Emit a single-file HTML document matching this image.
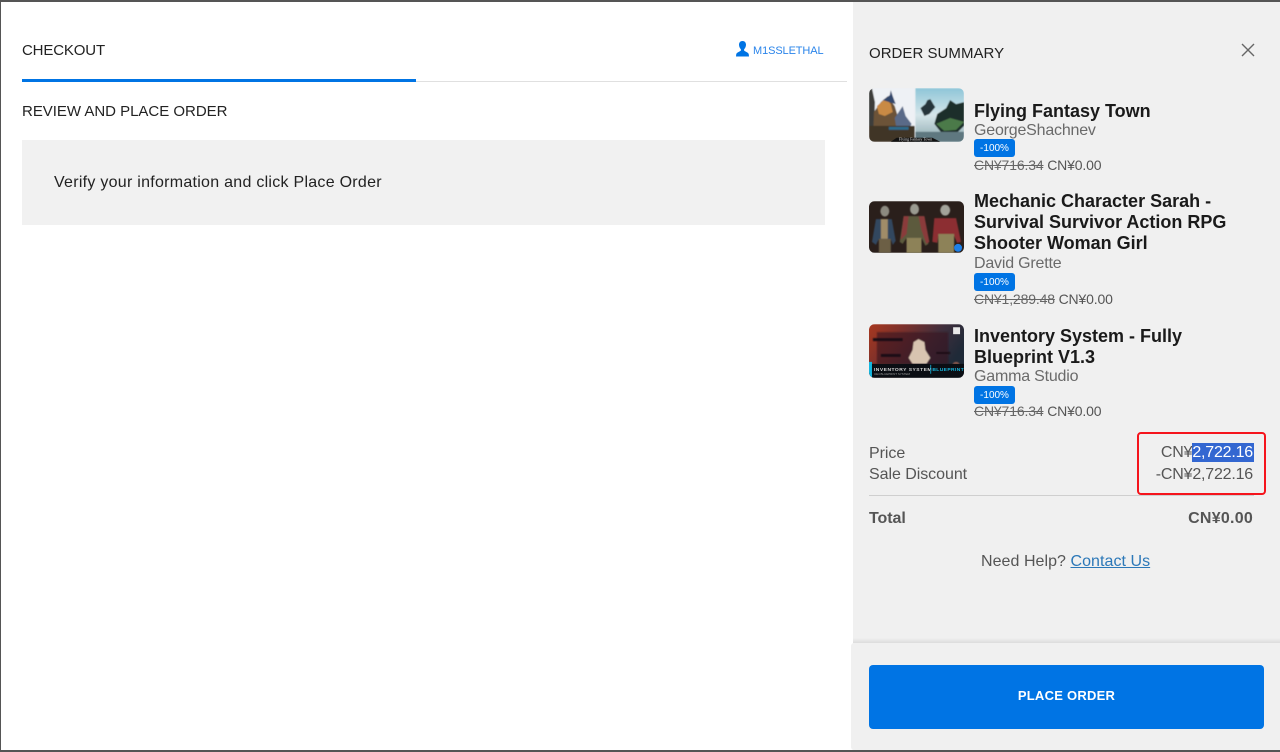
<!DOCTYPE html>
<html lang="en">
<head>
<meta charset="utf-8">
<title>Checkout</title>
<style>
html,body{margin:0;padding:0;background:#fff}
body{position:relative;width:1280px;height:752px;overflow:hidden;font-family:"Liberation Sans","Noto Sans CJK SC",sans-serif;color:#202020}
.t{position:absolute;white-space:nowrap;line-height:20px;height:20px}
.b{position:absolute}
.h{font-size:18px;font-weight:bold;color:#1a1a1a;line-height:21px;height:21px}
.s{font-size:16px;color:#6a6a6a;letter-spacing:-.2px}
.p{font-size:14px;color:#555;letter-spacing:-.15px}
.p s{color:#666}
.g{font-size:16px;color:#555;letter-spacing:-.05px}
.tag{position:absolute;left:974px;width:41px;height:18px;background:#0074e4;border-radius:3px;color:#fff;font-size:10px;line-height:20px;text-align:center}
svg.th{position:absolute;left:869px;width:95px;border-radius:6px;overflow:hidden}
</style>
</head>
<body>
<div class="b" style="left:853px;top:0;width:427px;height:752px;background:#f0f0f0"></div>

<div class="t" style="left:22px;top:41px;font-size:15px;color:#222;letter-spacing:-.15px">CHECKOUT</div>
<svg class="b" style="left:736px;top:41px" width="13" height="16" viewBox="0 0 13 16"><path d="M6.500 0C4.200 0 3 1.700 3 3.800c0 1.800.8 3.400 1.800 4.400.3.500.2 1.300-.3 1.700C3 11 .5 11.500.2 13.500L0 15.500h13l-.2-2c-.3-2-2.800-2.500-4.300-3.600-.5-.4-.6-1.200-.3-1.700C9.200 7.200 10 5.600 10 3.800 10 1.700 8.800 0 6.500 0z" fill="#0074e4"/></svg>
<div class="t" style="left:753px;top:41px;font-size:11px;color:#2a84ea;letter-spacing:-.1px">M1SSLETHAL</div>
<div class="b" style="left:22px;top:81px;width:825px;height:1px;background:#e0e0e0"></div>
<div class="b" style="left:22px;top:79px;width:394px;height:3px;background:#0074e4"></div>
<div class="t" style="left:22px;top:102px;font-size:15px;color:#222;letter-spacing:-.02px">REVIEW AND PLACE ORDER</div>
<div class="b" style="left:22px;top:140px;width:803px;height:85px;background:#f1f1f1"></div>
<div class="t" style="left:54px;top:173px;font-size:16px;color:#222;letter-spacing:.27px">Verify your information and click Place Order</div>

<div class="t" style="left:869px;top:44px;font-size:15px;color:#222;letter-spacing:.03px">ORDER SUMMARY</div>
<svg class="b" style="left:1241px;top:43px" width="14" height="14" viewBox="0 0 14 14"><path d="M1 1L13 13M13 1L1 13" stroke="#666" stroke-width="1.400" fill="none"/></svg>

<!-- Item 1 -->
<svg class="th" style="top:88px;height:54px" viewBox="0 0 96 54">
<defs><filter id="bl" x="-5%" y="-5%" width="110%" height="110%"><feGaussianBlur stdDeviation=".6"/></filter>
<linearGradient id="sky" x1="0" y1="0" x2="0" y2="1"><stop offset="0" stop-color="#8fc6d8"/><stop offset=".5" stop-color="#d6e6ea"/><stop offset="1" stop-color="#8aa6ac"/></linearGradient></defs>
<rect width="96" height="54" fill="#e8eef2"/>
<g filter="url(#bl)">
<rect x="0" y="0" width="46" height="54" fill="#eef1f5"/>
<path d="M0 0h3l3 14-1 32H0z" fill="#3e3e3a"/>
<path d="M5 24L12 14l7-6 7 10 3 10 6 4 4 10v12H4z" fill="#6c5338"/>
<path d="M8 18l9-8 5 6 2 8-8 4-6-2z" fill="#c98a44"/>
<path d="M14 12l7-5 1-5 2 6 3 8z" fill="#32476c"/>
<path d="M26 30l8-12 3 10 6 8-3 6H28z" fill="#5a6a88"/>
<rect x="0" y="38" width="46" height="16" fill="#3f3528"/>
<rect x="20" y="39" width="20" height="3" fill="#2f6a8c"/>
<rect x="47" y="0" width="49" height="54" fill="url(#sky)"/>
<path d="M52 20l5-4 2-4 3-1 3 5 2 3-6 7-5 2z" fill="#25343a"/>
<path d="M66 36l3-10 9-6 4-8 6 4 8-2v24l-8 8H74z" fill="#1f2f2a"/>
<path d="M68 36l14-6 14 4-8 8-12 1z" fill="#4c7a48"/>
<rect x="47" y="44" width="49" height="10" fill="#5f7880"/>
</g>
<path d="M22 54l6-4h36l8 4z" fill="#111"/>
<text x="47" y="53" font-size="4" fill="#ddd" text-anchor="middle" font-family="Liberation Serif, serif">Flying Fantasy Town</text>
</svg>
<div class="t h" style="left:974px;top:101px">Flying Fantasy Town</div>
<div class="t s" style="left:974px;top:121px">GeorgeShachnev</div>
<div class="tag" style="top:139px">-100%</div>
<div class="t p" style="left:974px;top:155px"><s>CN¥716.34</s> CN¥0.00</div>

<!-- Item 2 -->
<svg class="th" style="top:201px;height:52px" viewBox="0 0 96 52">
<rect width="96" height="52" fill="#2a1f1b"/>
<g filter="url(#bl)">
<ellipse cx="16" cy="10" rx="4.500" ry="5.500" fill="#8c8a80"/>
<path d="M7 18h16l4 22-3 4-2-6v14H10V38l-3 6-4-3z" fill="#33465f"/>
<rect x="12" y="18" width="7" height="20" fill="#a08c68"/>
<rect x="10" y="38" width="12" height="14" fill="#6c5e44"/>
<ellipse cx="46" cy="8" rx="4.500" ry="5.500" fill="#9a9a90"/>
<path d="M35 15h20l5 28-3 2-4-8v15H38V37l-4 6-3-2z" fill="#5c5a3e"/>
<path d="M50 15h6l5 26-3 2-5-14z" fill="#8a3a3a"/>
<path d="M35 15h5l-2 18-6 6z" fill="#8a3a3a"/>
<rect x="38" y="37" width="15" height="15" fill="#8d8258"/>
<ellipse cx="77" cy="9" rx="5" ry="5.500" fill="#a3a39a"/>
<path d="M66 17h22l5 24-4 1-3-7H70l-1 7-5-1z" fill="#8c2f33"/>
<rect x="70" y="33" width="16" height="19" fill="#8d8258"/>
</g>
<circle cx="90" cy="47" r="4" fill="#1e80e8"/>
</svg>
<div class="t h" style="left:974px;top:191px">Mechanic Character Sarah -</div>
<div class="t h" style="left:974px;top:212px">Survival Survivor Action RPG</div>
<div class="t h" style="left:974px;top:233px">Shooter Woman Girl</div>
<div class="t s" style="left:974px;top:254px">David Grette</div>
<div class="tag" style="top:273px">-100%</div>
<div class="t p" style="left:974px;top:289px"><s>CN¥1,289.48</s> CN¥0.00</div>

<!-- Item 3 -->
<svg class="th" style="top:324px;height:54px" viewBox="0 0 96 54">
<defs><linearGradient id="red" x1="0" y1="0" x2="1" y2=".4"><stop offset="0" stop-color="#a8381f"/><stop offset=".35" stop-color="#78302c"/><stop offset=".7" stop-color="#3e2e3c"/><stop offset="1" stop-color="#1f2a38"/></linearGradient></defs>
<rect width="96" height="54" fill="url(#red)"/>
<g filter="url(#bl)">
<rect x="8" y="8" width="72" height="32" fill="#35181e" opacity=".6"/>
<path d="M40 34l4-8 1-8 5-3 6 3 1 8 5 8-4 6H44z" fill="#d8c4b0"/>
<rect x="4" y="14" width="30" height="3" fill="#1e1012"/>
<rect x="12" y="30" width="20" height="3" fill="#1e1012"/>
<rect x="68" y="28" width="14" height="2" fill="#1e1012"/>
<circle cx="88" cy="42" r="4" fill="#8c5a50"/>
</g>
<rect x="0" y="40" width="96" height="14" fill="#0b0e14"/>
<rect x="0" y="38" width="3" height="16" fill="#15b8e0"/>
<text x="5" y="47" font-size="5" fill="#d8d8d8" font-weight="bold" letter-spacing=".5" font-family="Liberation Sans, sans-serif">INVENTORY SYSTEM</text>
<rect x="62" y="41" width=".8" height="9" fill="#15b8e0"/>
<text x="64" y="47" font-size="5" fill="#15b8e0" font-weight="bold" letter-spacing=".4" font-family="Liberation Sans, sans-serif">BLUEPRINT</text>
<text x="5" y="51" font-size="3" fill="#999" font-family="Liberation Sans, sans-serif">UE4 BLUEPRINT SYSTEM</text>
<rect x="85" y="3" width="7" height="7" fill="#e8e8e8"/>
</svg>
<div class="t h" style="left:974px;top:326px">Inventory System - Fully</div>
<div class="t h" style="left:974px;top:347px">Blueprint V1.3</div>
<div class="t s" style="left:974px;top:367px">Gamma Studio</div>
<div class="tag" style="top:386px">-100%</div>
<div class="t p" style="left:974px;top:401px"><s>CN¥716.34</s> CN¥0.00</div>

<!-- Totals -->
<div class="t g" style="left:869px;top:444px">Price</div>
<div class="t g" style="left:869px;top:465px">Sale Discount</div>
<div class="b" style="left:1192px;top:443px;width:62px;height:19px;background:#3367d1"></div>
<div class="t g" style="right:27px;top:443px;letter-spacing:-.2px">CN¥<span style="color:#fff">2,722.16</span></div>
<div class="t g" style="right:27px;top:465px;letter-spacing:-.2px">-CN¥2,722.16</div>
<div class="b" style="left:869px;top:495px;width:385px;height:1px;background:#cfcfcf"></div>
<div class="t g" style="left:869px;top:509px;font-weight:bold">Total</div>
<div class="t g" style="right:27px;top:509px;font-weight:bold;letter-spacing:.25px">CN¥0.00</div>
<div class="b" style="left:1137px;top:432px;width:125px;height:59px;border:2.500px solid #f5141c;border-radius:4px"></div>
<div class="t g" style="left:981px;top:552px;letter-spacing:.05px">Need Help? <span style="color:#2c78b8;text-decoration:underline">Contact Us</span></div>

<!-- Footer -->
<div class="b" style="left:853px;top:638px;width:427px;height:5px;background:linear-gradient(#f0f0f0,#dcdcdc)"></div>
<div class="b" style="left:851px;top:643px;width:429px;height:107px;background:#f0f0f0;border-radius:3px 0 0 3px"></div>
<div class="b" style="left:869px;top:665px;width:395px;height:64px;background:#0074e4;border-radius:4px"></div>
<div class="t" style="left:869px;top:686px;width:395px;text-align:center;color:#fff;font-size:13px;font-weight:bold;letter-spacing:.25px">PLACE ORDER</div>

<!-- Window frame -->
<div class="b" style="left:0;top:0;width:1280px;height:2px;background:#555"></div>
<div class="b" style="left:0;top:0;width:1px;height:752px;background:#555"></div>
<div class="b" style="left:0;top:750px;width:1280px;height:2px;background:#555"></div>
</body>
</html>
